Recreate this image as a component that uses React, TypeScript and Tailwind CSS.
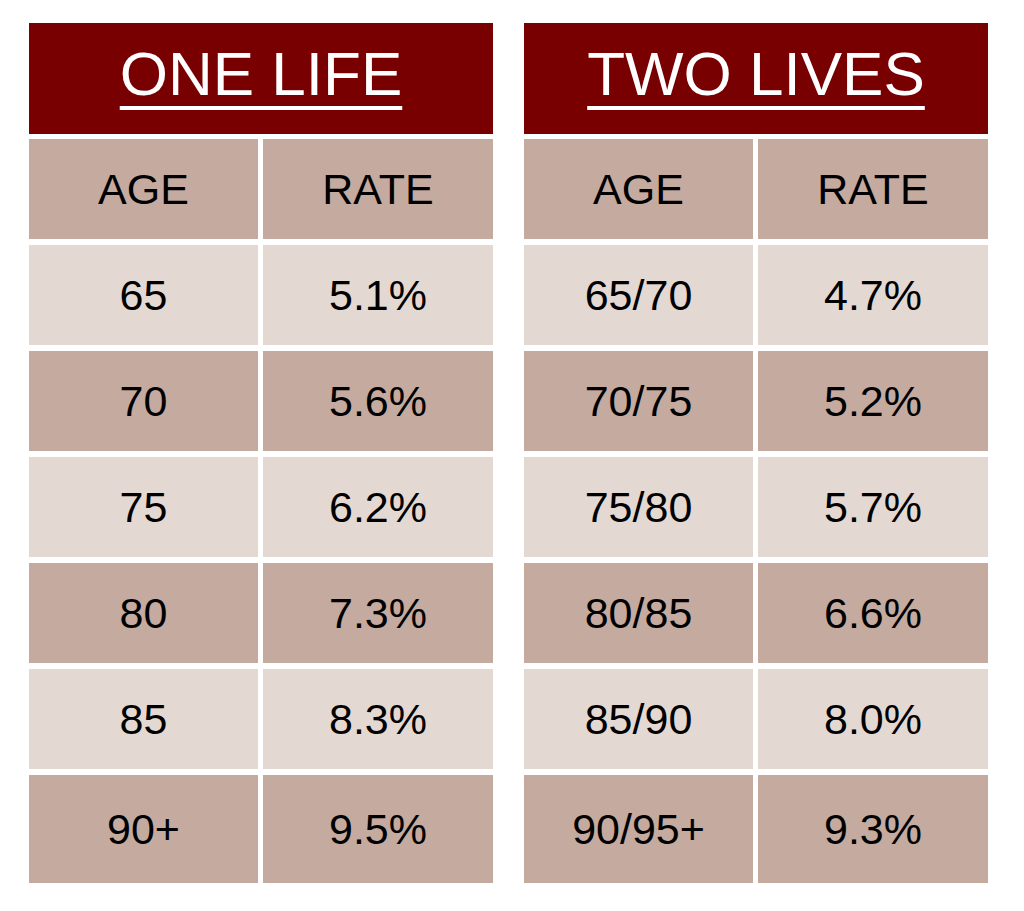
import React from "react";

const DARK = "bg-[#c4aa9f]";
const LIGHT = "bg-[#e4d8d2]";

type Row = [string, string];

function RateTable({ title, rows }: { title: string; rows: Row[] }) {
  return (
    <div className="flex flex-col w-[464px]">
      <div className="h-[111px] bg-[#790000] flex items-center justify-center">
        <span className="text-white text-[62px] leading-none underline decoration-[4px] underline-offset-[11px] pb-[10px]">
          {title}
        </span>
      </div>
      <div className="grid grid-cols-[229px_230px] gap-x-[5px] gap-y-[6px] mt-[5px]">
        {[["AGE", "RATE"] as Row, ...rows].map((r, i) => {
          const bg = i % 2 === 0 ? DARK : LIGHT;
          const h = i === rows.length ? "h-[108px]" : "h-[100px]";
          return (
            <React.Fragment key={i}>
              <div className={`${bg} ${h} flex items-center justify-center text-black text-[43px] leading-none`}>
                {r[0]}
              </div>
              <div className={`${bg} ${h} flex items-center justify-center text-black text-[43px] leading-none`}>
                {r[1]}
              </div>
            </React.Fragment>
          );
        })}
      </div>
    </div>
  );
}

export default function App() {
  const one: Row[] = [
    ["65", "5.1%"],
    ["70", "5.6%"],
    ["75", "6.2%"],
    ["80", "7.3%"],
    ["85", "8.3%"],
    ["90+", "9.5%"],
  ];
  const two: Row[] = [
    ["65/70", "4.7%"],
    ["70/75", "5.2%"],
    ["75/80", "5.7%"],
    ["80/85", "6.6%"],
    ["85/90", "8.0%"],
    ["90/95+", "9.3%"],
  ];
  return (
    <div
      className="w-[1024px] h-[911px] bg-white flex gap-[31px] pl-[29px] pt-[23px]"
      style={{ fontFamily: '"Liberation Sans", Arial, sans-serif' }}
    >
      <RateTable title="ONE LIFE" rows={one} />
      <RateTable title="TWO LIVES" rows={two} />
    </div>
  );
}
